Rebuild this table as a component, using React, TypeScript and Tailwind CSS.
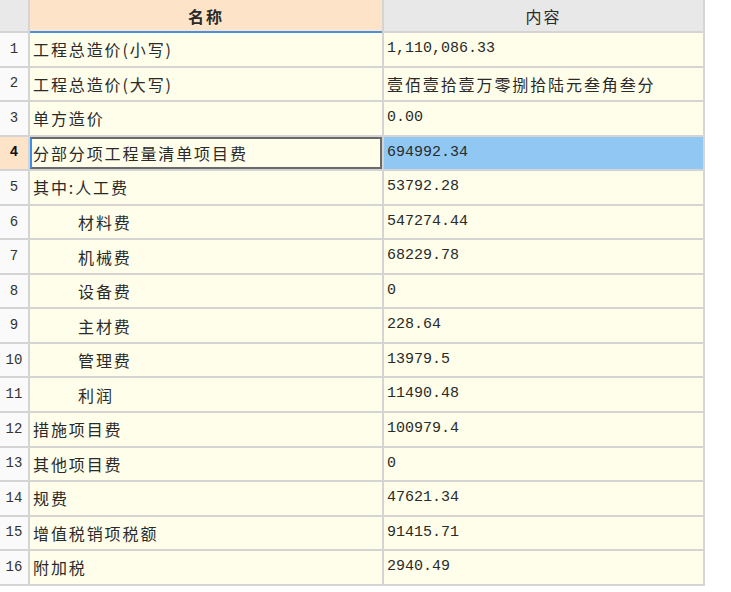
import React from 'react';

type Row = { name: string; value: string; indent?: boolean };

const rows: Row[] = [
  { name: '工程总造价(小写)', value: '1,110,086.33' },
  { name: '工程总造价(大写)', value: '壹佰壹拾壹万零捌拾陆元叁角叁分' },
  { name: '单方造价', value: '0.00' },
  { name: '分部分项工程量清单项目费', value: '694992.34' },
  { name: '其中:人工费', value: '53792.28' },
  { name: '材料费', value: '547274.44', indent: true },
  { name: '机械费', value: '68229.78', indent: true },
  { name: '设备费', value: '0', indent: true },
  { name: '主材费', value: '228.64', indent: true },
  { name: '管理费', value: '13979.5', indent: true },
  { name: '利润', value: '11490.48', indent: true },
  { name: '措施项目费', value: '100979.4' },
  { name: '其他项目费', value: '0' },
  { name: '规费', value: '47621.34' },
  { name: '增值税销项税额', value: '91415.71' },
  { name: '附加税', value: '2940.49' },
];

const cjk = { fontFamily: '"Noto Sans CJK SC", "Noto Sans", sans-serif' };
const mono = { fontFamily: '"Liberation Mono", "Noto Sans CJK SC", monospace' };

// 选中的行 (第4行)
const SELECTED = 3;

export default function App() {
  return (
    <div className="w-[731px] h-[592px] bg-white text-[#2a2a2a]">
      <div className="w-[705px] border-r-2 border-[#d6d6d6]">
        {/* 表头 */}
        <div className="flex h-[33px]">
          <div className="w-[30px] bg-[#e9e9e9] border-r-2 border-[#d4d4d4] border-b-2 border-b-[#d4d4d4]" />
          <div
            className="w-[352px] bg-[#fde3c8] border-b-2 border-[#4a90e2] flex items-center justify-center text-[16px] font-bold tracking-[2px]"
            style={cjk}
          >
            名称
          </div>
          <div
            className="flex-1 bg-[#e8e8e8] border-l-2 border-[#d4d4d4] border-b-2 border-b-[#d4d4d4] flex items-center justify-center text-[16px] tracking-[2px]"
            style={cjk}
          >
            内容
          </div>
        </div>

        {rows.map((r, i) => {
          const sel = i === SELECTED;
          const isNum = /^[0-9.,]+$/.test(r.value);
          return (
            <div key={i} className="flex h-[34.56px] border-b-2 border-[#d4d4d4]">
              <div
                className={`w-[30px] border-r-2 border-[#d4d4d4] flex items-center justify-center text-[14px] ${
                  sel ? 'bg-[#fde3c8] font-bold text-[#111]' : 'bg-[#fafafa] text-[#333]'
                }`}
                style={mono}
              >
                {i + 1}
              </div>
              <div
                className={`w-[352px] flex items-center text-[16px] tracking-[1.9px] ${
                  sel
                    ? 'bg-[#fefeea] border-2 border-[#6a6a6a] border-l-[#3d8ee8] pl-[1px]'
                    : 'bg-[#fefeea] pl-[3px]'
                } ${r.indent ? 'pl-[48px]' : ''}`}
                style={cjk}
              >
                {r.name}
              </div>
              <div
                className={`flex-1 border-l-2 border-[#d4d4d4] flex items-center pl-[3px] ${
                  sel ? 'bg-[#90c7f3]' : 'bg-[#fefeea]'
                } ${isNum ? 'text-[15px]' : 'text-[16px] tracking-[1.9px]'}`}
                style={isNum ? mono : cjk}
              >
                {r.value}
              </div>
            </div>
          );
        })}
      </div>
    </div>
  );
}
